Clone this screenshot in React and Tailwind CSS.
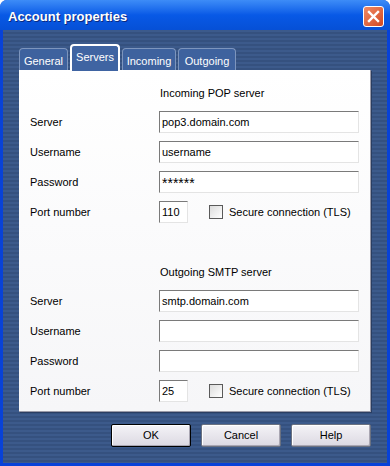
import React from 'react'

const font = { fontFamily: '"Liberation Sans", Arial, sans-serif' }

function TextBox({ value, className = 'flex-1', big }) {
  return (
    <div
      className={`${className} h-[22px] border border-t-[#7a7a7a] border-l-[#7a7a7a] border-b-[#e4e4e4] border-r-[#e4e4e4] bg-white px-[2px] flex items-center ${
        big ? 'pt-[3px] text-[14px]' : 'text-[11px]'
      } text-black`}
    >
      {value}
    </div>
  )
}

function CheckBox({ label }) {
  return (
    <div className="ml-[21px] flex items-center gap-[6px] whitespace-nowrap">
      <div className="h-[14px] w-[14px] shrink-0 border border-[#5a5a5a] bg-gradient-to-br from-[#dcdcdc] to-white" />
      <span className="text-[11px] text-black">{label}</span>
    </div>
  )
}

function Row({ label, children }) {
  return (
    <div className="flex h-[22px] items-center">
      <div className="w-[129px] text-[11px] text-black">{label}</div>
      {children}
    </div>
  )
}

function Section({ title, server, user, pass, port }) {
  return (
    <>
      <div className="flex h-[16px] items-center pl-[130px] text-[11px] text-black">{title}</div>
      <div className="mt-[10px] flex flex-col gap-[8px]">
        <Row label="Server">
          <TextBox value={server} />
        </Row>
        <Row label="Username">
          <TextBox value={user} />
        </Row>
        <Row label="Password">
          <TextBox value={pass} big />
        </Row>
        <Row label="Port number">
          <TextBox value={port} className="w-[29px]" />
          <CheckBox label="Secure connection (TLS)" />
        </Row>
      </div>
    </>
  )
}

function Tab({ label, width, active }) {
  if (active) {
    return (
      <div
        className={`${width} relative z-10 -mb-[1px] flex h-[27px] items-start justify-center rounded-t-[4px] border-2 border-b-0 border-white bg-[#3f64a2] pt-[3px] text-[11px] text-white`}
      >
        {label}
      </div>
    )
  }
  return (
    <div
      className={`${width} flex h-[22px] items-start justify-center rounded-t-[4px] border border-b-0 border-[#7d95bd] bg-[#3e629e] pt-[4px] text-[11px] text-white`}
    >
      {label}
    </div>
  )
}

function Button({ label, primary }) {
  return (
    <button
      type="button"
      className={`h-[23px] w-[80px] rounded-[2px] border ${
        primary ? 'border-black' : 'border-[#6b7180]'
      } bg-gradient-to-b from-[#f4f3f7] to-[#dcd9e2] text-[11px] text-black shadow-[inset_-1px_-1px_0_#a9a6b2,inset_1px_1px_0_#ffffff]`}
    >
      {label}
    </button>
  )
}

export default function App() {
  return (
    <div style={font} className="flex h-[466px] w-[390px] flex-col overflow-hidden rounded-t-[7px] bg-[#0842d8]">
      <div className="flex h-[30px] items-center justify-between bg-gradient-to-b from-[#3d8cf7] via-[#0859e6] to-[#0650d6] pl-[8px] pr-[6px]">
        <span className="pt-[3px] text-[13px] font-bold text-white [text-shadow:1px_1px_0_#0a2a80]">
          Account properties
        </span>
        <div className="mt-[2px] flex h-[21px] w-[21px] items-center justify-center rounded-[3px] border border-white bg-gradient-to-br from-[#f08a64] to-[#d2461e]">
          <svg width="13" height="13" viewBox="0 0 13 13">
            <path d="M2 2 L11 11 M11 2 L2 11" stroke="white" strokeWidth="2.4" strokeLinecap="square" />
          </svg>
        </div>
      </div>
      <div className="mx-[3px] mb-[3px] flex flex-1 flex-col bg-[repeating-linear-gradient(180deg,#3c5a8b_0px,#3c5a8b_2px,#35517f_2px,#35517f_4px)] px-[16px]">
        <div className="mt-[14px] flex items-end gap-[2px]">
          <Tab label="General" width="w-[49px]" />
          <Tab label="Servers" width="w-[50px]" active />
          <Tab label="Incoming" width="w-[54px]" />
          <Tab label="Outgoing" width="w-[58px]" />
        </div>
        <div className="flex h-[342px] flex-col border-r border-b border-[#9a9aa8] bg-gradient-to-b from-white to-[#f6f6f8] px-[11px] pt-[15px] shadow-[1px_1px_0_#2a3e62]">
          <Section
            title="Incoming POP server"
            server="pop3.domain.com"
            user="username"
            pass="******"
            port="110"
          />
          <div className="h-[41px]" />
          <Section title="Outgoing SMTP server" server="smtp.domain.com" user="" pass="" port="25" />
        </div>
        <div className="mt-[12px] flex justify-end gap-[10px]">
          <Button label="OK" primary />
          <Button label="Cancel" />
          <Button label="Help" />
        </div>
      </div>
    </div>
  )
}
